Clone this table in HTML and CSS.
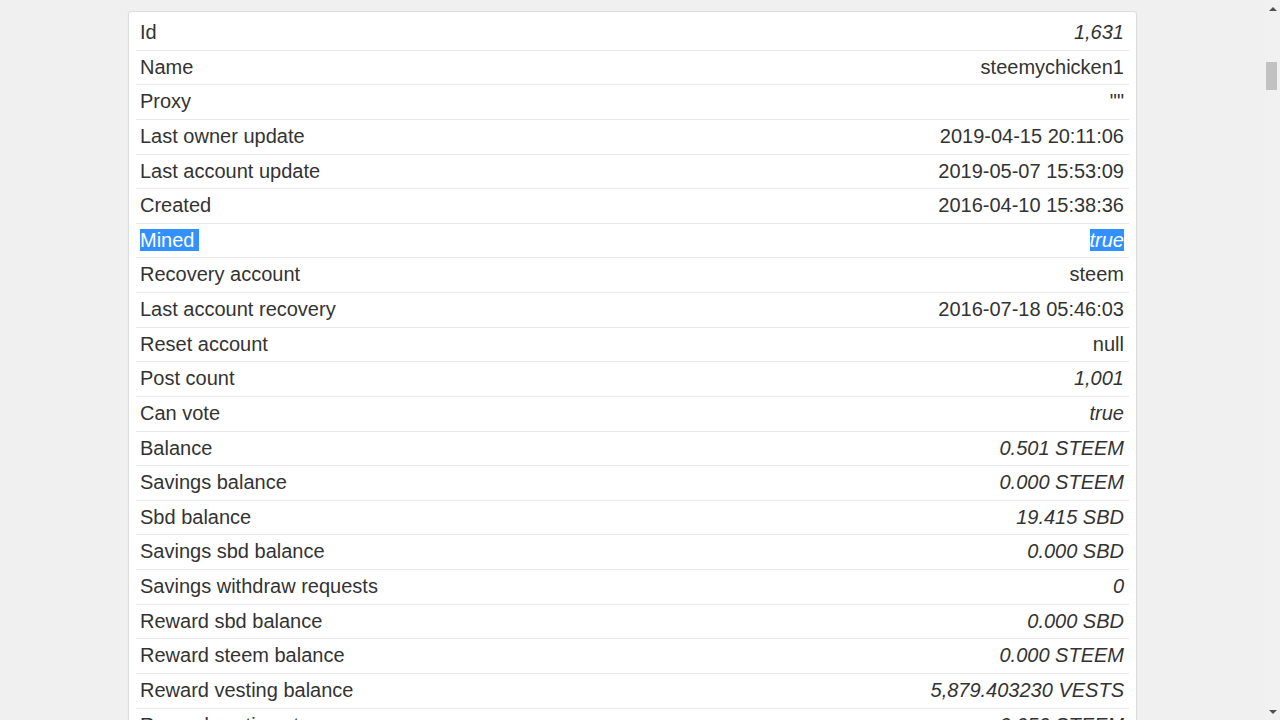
FILE: index.html
```html
<!DOCTYPE html>
<html lang="en">
<head>
<meta charset="utf-8">
<title>Account steemychicken1</title>
<link rel="stylesheet" href="styles.css">
</head>
<body>
<div class="page">
  <main class="content">
    <div class="card">
      <table class="props">
        <tbody>
          <tr><td>Id</td><td class="val num">1,631</td></tr>
          <tr><td>Name</td><td class="val">steemychicken1</td></tr>
          <tr><td>Proxy</td><td class="val">""</td></tr>
          <tr><td>Last owner update</td><td class="val">2019-04-15 20:11:06</td></tr>
          <tr><td>Last account update</td><td class="val">2019-05-07 15:53:09</td></tr>
          <tr><td>Created</td><td class="val">2016-04-10 15:38:36</td></tr>
          <tr><td><span class="sel sel-key">Mined</span></td><td class="val num"><span class="sel">true</span></td></tr>
          <tr><td>Recovery account</td><td class="val">steem</td></tr>
          <tr><td>Last account recovery</td><td class="val">2016-07-18 05:46:03</td></tr>
          <tr><td>Reset account</td><td class="val">null</td></tr>
          <tr><td>Post count</td><td class="val num">1,001</td></tr>
          <tr><td>Can vote</td><td class="val num">true</td></tr>
          <tr><td>Balance</td><td class="val num">0.501 STEEM</td></tr>
          <tr><td>Savings balance</td><td class="val num">0.000 STEEM</td></tr>
          <tr><td>Sbd balance</td><td class="val num">19.415 SBD</td></tr>
          <tr><td>Savings sbd balance</td><td class="val num">0.000 SBD</td></tr>
          <tr><td>Savings withdraw requests</td><td class="val num">0</td></tr>
          <tr><td>Reward sbd balance</td><td class="val num">0.000 SBD</td></tr>
          <tr><td>Reward steem balance</td><td class="val num">0.000 STEEM</td></tr>
          <tr><td>Reward vesting balance</td><td class="val num">5,879.403230 VESTS</td></tr>
          <tr><td>Reward vesting steem</td><td class="val num">0.050 STEEM</td></tr>
          <tr><td>Vesting shares</td><td class="val num">0.000000 VESTS</td></tr>
        </tbody>
      </table>
    </div>
  </main>
  <div class="scrollbar">
    <div class="sb-btn"><span class="tri tri-up"></span></div>
    <div class="sb-track"><div class="sb-thumb"></div></div>
    <div class="sb-btn"><span class="tri tri-down"></span></div>
  </div>
</div>
</body>
</html>
```
FILE: styles.css
```css
html, body {
  margin: 0;
  padding: 0;
  background: #f0f0f0;
}

.page {
  display: flex;
  height: 720px;
  overflow: hidden;
  font-family: "Liberation Sans", Arial, sans-serif;
  color: #333333;
}

.content {
  flex: 1;
  padding-top: 11px;
  overflow: hidden;
}

.card {
  box-sizing: border-box;
  width: 1009px;
  margin: 0 auto;
  background: #ffffff;
  border: 1px solid #dcdcdc;
  border-radius: 3px;
  padding: 3px 7px 0;
  box-shadow: 0 1px 2px rgba(0, 0, 0, 0.05);
}

.props {
  width: 100%;
  border-collapse: collapse;
  font-size: 20px;
  line-height: 23.63px;
}

.props td {
  padding: 5px 5px 5px 4px;
  border-top: 1px solid #e9e9e9;
  white-space: nowrap;
}

.props tr:first-child td {
  border-top-color: transparent;
}

.props .val {
  text-align: right;
  padding-right: 5px;
}

.props .num {
  font-style: italic;
}

.sel {
  background: #3390ff;
  color: #ffffff;
}

.sel-key {
  padding-right: 5px;
}

.scrollbar {
  width: 15px;
  flex: none;
  display: flex;
  flex-direction: column;
  background: #f1f1f1;
}

.sb-btn {
  height: 17px;
  display: flex;
  align-items: center;
  justify-content: center;
  flex: none;
}

.sb-track {
  flex: 1;
  padding-top: 45px;
}

.sb-thumb {
  height: 28px;
  margin: 0 3px 0 1px;
  background: #c1c1c1;
}

.tri {
  width: 0;
  height: 0;
  border-left: 4px solid transparent;
  border-right: 4px solid transparent;
}

.tri-up {
  border-bottom: 4px solid #505050;
}

.tri-down {
  border-top: 4px solid #505050;
}
```
